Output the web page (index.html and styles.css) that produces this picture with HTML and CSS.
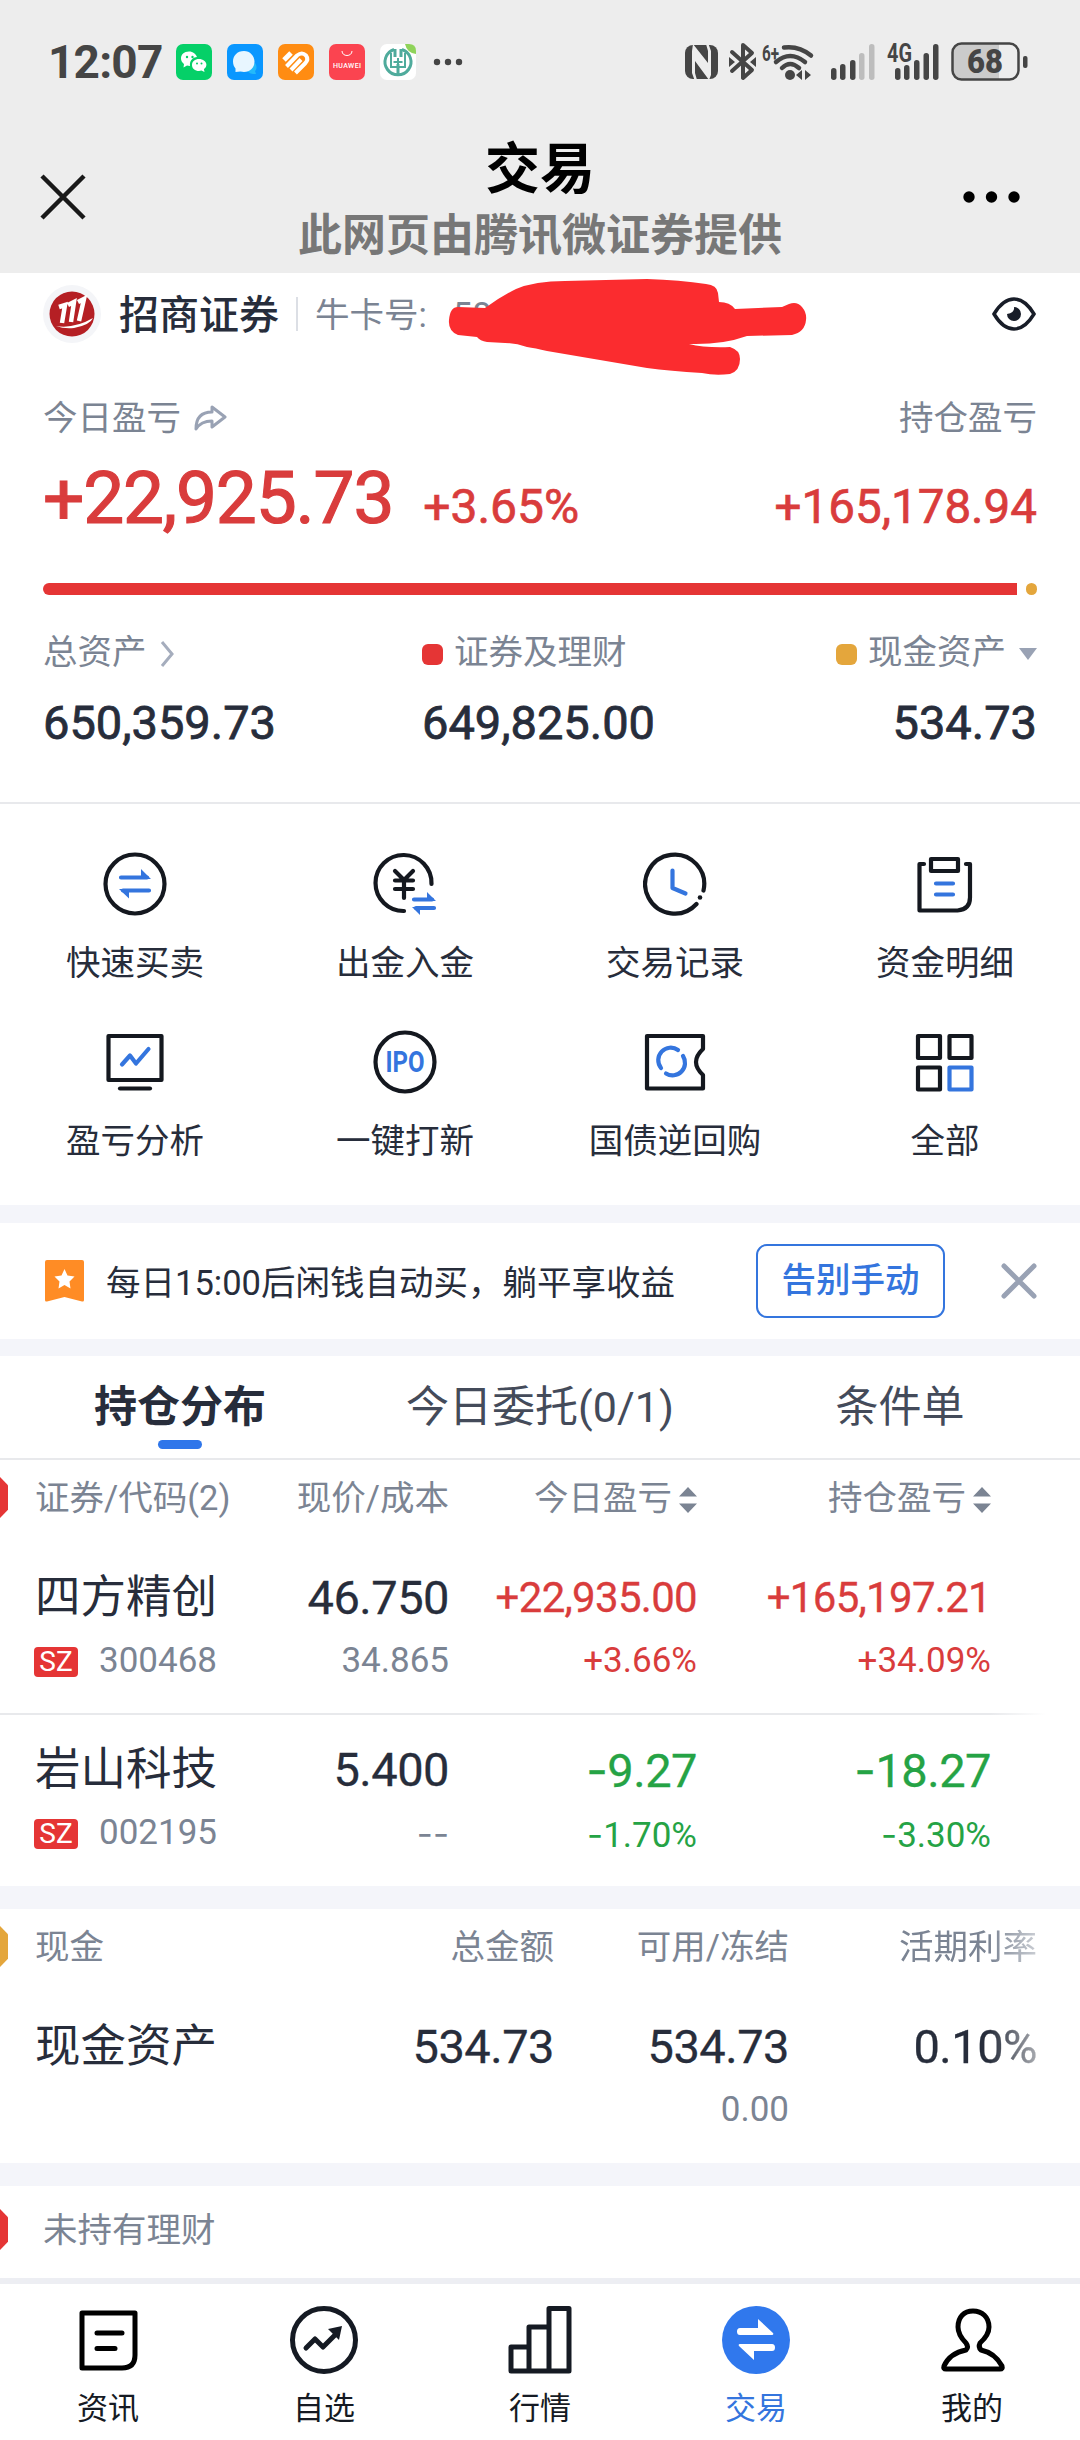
FILE: index.html
```
<!DOCTYPE html>
<html lang="zh-CN">
<head>
    <meta charset="UTF-8">
    <meta name="viewport" content="width=device-width, initial-scale=1.0">
    <title>交易</title>
    <link rel="stylesheet" href="styles.css">
</head>
<body>
    <div class="status-bar">
        <span class="time">12:07</span>
        <div class="app-icons">
            <svg width="36" height="36" viewBox="0 0 36 36">
                <rect width="36" height="36" rx="7" fill="#05d068"/>
                <path d="M13 7.500c-5 0-8 3-8 7 0 2 1 4 3 5.500l-.5 3.500 3.500-2 3 .5c-1-6 4-9 7-9-1-3-4-5.500-8-5.500z" fill="#fff"/>
                <path d="M23 15c-4 0-7 2.500-7 6s3 6 7 6l2.500-.4 3 1.500-.6-3c1.500-1 2.500-2.500 2.500-4.500 0-3-3.500-5.600-7.400-5.600z" fill="#fff"/>
                <g fill="#05d068"><circle cx="11" cy="13" r="1.200"/><circle cx="16.500" cy="13" r="1.200"/><circle cx="21" cy="19.500" r="1"/><circle cx="25.500" cy="19.500" r="1"/></g>
            </svg>
            <svg width="36" height="36" viewBox="0 0 36 36">
                <rect width="36" height="36" rx="7" fill="#0a97ff"/>
                <path d="M23 24l5-5c2 3 2 6 0 8l1 3c-4 0-7 0-9-4z" fill="#23b9fa"/>
                <path d="M17 7C10 7 6 12 6 17.500c0 3 1 5 2.500 7V28l5-.5c8 2 14-3 14-10C27.500 12 23 7 17 7z" fill="#e8f6ff"/>
            </svg>
            <svg width="36" height="36" viewBox="0 0 36 36">
                <rect width="36" height="36" rx="7" fill="#ff8c12"/>
                <g stroke="#fff" fill="none">
                    <path d="M6 16l7-7" stroke-width="5"/>
                    <path d="M8.500 22.500L19 11.500q5-4 9 0 3 4-1 8L17.500 29" stroke-width="4"/>
                    <path d="M13 26l10-10.500" stroke-width="4"/>
                </g>
            </svg>
            <svg width="36" height="36" viewBox="0 0 36 36">
                <rect width="36" height="36" rx="7" fill="#fb4450"/>
                <path d="M13 7c0 6 10 6 10 0" fill="none" stroke="#fff" stroke-width="1"/>
                <text class="huawei" x="18" y="23.500" text-anchor="middle" textLength="28">HUAWEI</text>
            </svg>
            <svg width="36" height="36" viewBox="0 0 36 36">
                <rect width="36" height="36" rx="7" fill="#fff"/>
                <path d="M25 0h4q7 0 7 7v3q-9-1-11-10z" fill="#8fd35a"/>
                <g fill="none" stroke="#4fab9c">
                    <path d="M14 5.500a13 13 0 1 0 8 0" stroke-width="3"/>
                    <path d="M18 20v12M15 5v8M21 5v8" stroke-width="3"/>
                    <path d="M11 9v14h14V9M13.500 18h9M18 14v8" stroke-width="2"/>
                </g>
            </svg>
        </div>
        <svg class="more-apps" width="30" height="10" viewBox="0 0 30 10" fill="#454545"><circle cx="4" cy="5" r="3.200"/><circle cx="15" cy="5" r="3.200"/><circle cx="26" cy="5" r="3.200"/></svg>

        <!-- NFC, bluetooth, wifi, two SIM signals, battery -->
        <svg class="system-icons" width="350" height="44" viewBox="0 0 350 44">
            <g fill="#454545">
                <rect x="5" y="5" width="33" height="34" rx="8"/>
                <path d="M13 4l15 19V11l-2-7h2.500l2.500 7v24l-2 5L15 21v12l2 7h-2.500L12 33V11z" fill="#ededed"/>
            </g>
            <g fill="none" stroke="#454545" stroke-width="4" stroke-linecap="round" stroke-linejoin="round">
                <path d="M52 12l20 18-9 8V5l9 8-20 18"/>
            </g>
            <path d="M49 17l6 5-6 5zM76 17l-6 5 6 5z" fill="#454545"/>
            <text class="net-small" x="82" y="21" textLength="17" lengthAdjust="spacingAndGlyphs">6+</text>
            <g fill="none" stroke="#454545" stroke-width="4.500">
                <path d="M104 7.500q15-2 27 8" stroke-linecap="round"/>
                <path d="M96 22q14-12 29 0" stroke-linecap="round"/>
                <path d="M102 28q8-8 17 0" stroke-linecap="round"/>
            </g>
            <g fill="#454545">
                <circle cx="110" cy="35" r="5"/>
                <path d="M116 35l6-5v10zM131 35l-6-5v10z"/>
                <rect x="151" y="28" width="5.500" height="12" rx="2.700"/>
                <rect x="160" y="24" width="5.500" height="16" rx="2.700"/>
                <rect x="170" y="20" width="5.500" height="20" rx="2.700"/>
                <rect x="179" y="13" width="5.500" height="27" rx="2.700" fill="#bdbdbd"/>
                <rect x="189" y="4" width="5.500" height="36" rx="2.700" fill="#bdbdbd"/>
                <rect x="215" y="28" width="5.500" height="12" rx="2.700"/>
                <rect x="224" y="25" width="5.500" height="15" rx="2.700"/>
                <rect x="234" y="20" width="5.500" height="20" rx="2.700"/>
                <rect x="243.500" y="13" width="5.500" height="27" rx="2.700"/>
                <rect x="253" y="4" width="5.500" height="36" rx="2.700"/>
            </g>
            <text class="net-label" x="207" y="22" textLength="25" lengthAdjust="spacingAndGlyphs">4G</text>
            <path d="M281 4h38v36h-38q-8 0-8-8V12q0-8 8-8z" fill="#cbcbcb"/>
            <rect x="272.500" y="3.500" width="66" height="36" rx="9" fill="none" stroke="#454545" stroke-width="2.500"/>
            <rect x="343" y="16" width="4.500" height="12" rx="2" fill="#454545"/>
            <text class="battery-level" x="305" y="33" text-anchor="middle" textLength="36" lengthAdjust="spacingAndGlyphs">68</text>
        </svg>
    </div>

    <header class="nav">
        <svg width="46" height="46" viewBox="0 0 46 46" stroke="#191919" stroke-width="4.500"><path d="M2 2l42 42M44 2L2 44"/></svg>
        <div class="nav-title">
            <h1>交易</h1>
            <p>此网页由腾讯微证券提供</p>
        </div>
        <svg class="nav-more" width="58" height="12" viewBox="0 0 58 12"><circle cx="7" cy="6" r="5.700"/><circle cx="29.500" cy="6" r="5.700"/><circle cx="52" cy="6" r="5.700"/></svg>
    </header>

    <main>
        <section class="broker">
            <svg width="58" height="58" viewBox="0 0 58 58">
                <circle cx="29" cy="29" r="29" fill="#f4f5f8"/>
                <circle cx="29" cy="29" r="22.500" fill="#b51f24"/>
                <path d="M13 41q18 3 37-8-3 7-19 10-10 1-18-2z" fill="#fff"/>
                <path d="M16 22l6-2-3 18M25 20l6-3-3 20M35 17l6-3-5 22" fill="none" stroke="#fff" stroke-width="4.500"/>
            </svg>
            <span class="broker-name">招商证券</span>
            <span class="broker-sep"></span>
            <span class="card-no">牛卡号:<span class="digits">58</span></span>
            <svg class="eye" width="44" height="36" viewBox="0 0 44 36">
                <path d="M2 18Q11 3 22 3t20 15Q33 33 22 33T2 18z" fill="none" stroke="#181d28" stroke-width="3.500"/>
                <path d="M22 11q1 6-7 7a7 7 0 1 0 7-7z" fill="#181d28"/>
            </svg>
            <svg class="scribble" width="360" height="100" viewBox="448 277 360 100">
                <path d="M449 320Q450 307 458 307L485 308Q500 297 516 289Q535 281 565 281L647 279Q680 280 706 284Q717 285 718 293L719 302Q730 302 735 309L782 307L789 304Q797 301 802 307Q807 313 806 320Q805 332 792 335L747 336Q722 345 689 344Q705 348 730 347Q740 350 740 359Q740 371 730 374Q715 376 702 373Q670 371 647 368L547 351Q535 348 527 347Q516 343 505 343L487 342Q480 341 477 337L458 335Q448 331 449 320z" fill="#fb2c2f"/>
            </svg>
        </section>

        <section class="summary">
            <div class="line labels">
                <span>今日盈亏</span>
                <svg class="share" width="34" height="28" viewBox="0 0 34 28"><path d="M3 25q0-17 16-17V3l13 10-13 10v-6Q8 17 3 25z" fill="none" stroke="#99a2b4" stroke-width="3" stroke-linejoin="round"/></svg>
                <span class="push">持仓盈亏</span>
            </div>
            <div class="line profit">
                <span class="big">+22,925.73</span>
                <span class="rate">+3.65%</span>
                <span class="hold push">+165,178.94</span>
            </div>
            <div class="ratio"><span class="ratio-stock"></span><span class="ratio-cash"></span></div>
            <div class="assets">
                <div class="asset">
                    <div class="asset-label">总资产<svg class="chevron" width="16" height="26" viewBox="0 0 16 26"><path d="M3 1l10 12L3 25" fill="none" stroke="#a5adbd" stroke-width="3"/></svg></div>
                    <div class="asset-value">650,359.73</div>
                </div>
                <div class="asset">
                    <div class="asset-label"><i class="mark red"></i>证券及理财</div>
                    <div class="asset-value">649,825.00</div>
                </div>
                <div class="asset right">
                    <div class="asset-label"><i class="mark gold"></i>现金资产<svg class="drop" width="18" height="12" viewBox="0 0 18 12"><path d="M0 0h18L9 12z" fill="#99a2b4"/></svg></div>
                    <div class="asset-value">534.73</div>
                </div>
            </div>
        </section>

        <section class="menu">
            <div class="menu-item">
                <svg class="icon" viewBox="0 0 64 64">
                    <circle cx="32" cy="32" r="29.500"/>
                    <path class="blue" d="M18 25.500h26M46 38.500H20"/>
                    <path class="blue-fill" d="M38 17l10 10H38zM26 46.500L16 37h10z"/>
                </svg>
                <span>快速买卖</span>
            </div>
            <div class="menu-item">
                <svg class="icon" viewBox="0 0 64 64">
                    <path d="M58.500 32A28 28 0 1 0 31 59"/>
                    <path d="M22 19l9 9 9-9M22 28.500h18M22 37h18M31 28v18"/>
                    <path class="blue" d="M41 47.500h18M61 56H43"/>
                    <path class="blue-fill" d="M54 40l9 9h-9zM47 63l-8-8h8z"/>
                </svg>
                <span>出金入金</span>
            </div>
            <div class="menu-item">
                <svg class="icon" viewBox="0 0 64 64">
                    <path d="M60.500 38.500A29.500 29.500 0 1 0 53.500 52"/>
                    <circle class="dot" cx="57" cy="45.500" r="2.300"/>
                    <path class="blue" d="M29.500 18.500V36l13 5.500"/>
                </svg>
                <span>交易记录</span>
            </div>
            <div class="menu-item">
                <svg class="icon" viewBox="0 0 64 64">
                    <path d="M11 12H6.500v46.500h38q12.500-1 12.500-13V12h-4"/>
                    <rect x="18" y="7" width="27" height="12"/>
                    <path class="blue" d="M23 31.500h17M23 42.500h17"/>
                </svg>
                <span>资金明细</span>
            </div>
            <div class="menu-item">
                <svg class="icon" viewBox="0 0 64 64">
                    <rect x="5.500" y="6" width="53" height="44"/>
                    <path d="M17 58.500h30"/>
                    <path class="blue" d="M19 34.500l8-9 6 8L45.500 19"/>
                </svg>
                <span>盈亏分析</span>
            </div>
            <div class="menu-item">
                <svg class="icon" viewBox="0 0 64 64">
                    <circle cx="32" cy="32" r="29.500"/>
                    <text class="ipo" x="32" y="42" text-anchor="middle" textLength="39" lengthAdjust="spacingAndGlyphs">IPO</text>
                </svg>
                <span>一键打新</span>
            </div>
            <div class="menu-item">
                <svg class="icon" viewBox="0 0 64 64">
                    <path d="M4 6h56v13q-14 13 0 26v13.500H4z"/>
                    <path class="blue" d="M35 20A12.500 12.500 0 0 0 18 38M23 43.500A12.500 12.500 0 0 0 40 26"/>
                </svg>
                <span>国债逆回购</span>
            </div>
            <div class="menu-item">
                <svg class="icon" viewBox="0 0 64 64">
                    <rect x="5" y="6" width="22" height="22"/>
                    <rect x="36.500" y="6" width="22" height="22"/>
                    <rect x="5" y="37.500" width="22" height="22"/>
                    <rect class="blue" x="36.500" y="37.500" width="22" height="22"/>
                </svg>
                <span>全部</span>
            </div>
        </section>

        <section class="notice">
            <svg width="39" height="42" viewBox="0 0 39 42">
                <path d="M2 0h35q2 0 2 2v38q0 2-2 1.500L19.500 37 2 41.500q-2 .5-2-1.500V2q0-2 2-2z" fill="#ff8c25"/>
                <path d="M19.500 9l3 6.500 7 1-5 5 1 7-6-3.500-6 3.500 1-7-5-5 7-1z" fill="#fff"/>
            </svg>
            <span class="notice-text">每日15:00后闲钱自动买，躺平享收益</span>
            <button class="notice-btn">告别手动</button>
            <svg class="notice-close" width="36" height="36" viewBox="0 0 36 36"><path d="M3 3l30 30M33 3L3 33" stroke="#99a2b4" stroke-width="5" stroke-linecap="round"/></svg>
        </section>

        <nav class="tabs">
            <a class="tab active">持仓分布</a>
            <a class="tab">今日委托(0/1)</a>
            <a class="tab">条件单</a>
        </nav>

        <section class="stocks">
            <div class="row head marker">
                <span>证券/代码(2)</span>
                <span>现价/成本</span>
                <span>今日盈亏<svg class="sort" width="18" height="26" viewBox="0 0 18 26"><path d="M9 0l9 9.500H0zM9 26l9-9.500H0z"/></svg></span>
                <span>持仓盈亏<svg class="sort" width="18" height="26" viewBox="0 0 18 26"><path d="M9 0l9 9.500H0zM9 26l9-9.500H0z"/></svg></span>
            </div>
            <div class="row stock">
                <div><p class="name">四方精创</p><p class="sub"><b class="sz">SZ</b>300468</p></div>
                <div><p class="num">46.750</p><p class="sub">34.865</p></div>
                <div class="up"><p class="num small">+22,935.00</p><p class="sub">+3.66%</p></div>
                <div class="up"><p class="num small">+165,197.21</p><p class="sub">+34.09%</p></div>
            </div>
            <div class="row stock">
                <div><p class="name">岩山科技</p><p class="sub"><b class="sz">SZ</b>002195</p></div>
                <div><p class="num">5.400</p><p class="sub"><span class="dash">--</span></p></div>
                <div class="down"><p class="num"><span class="dash">-</span>9.27</p><p class="sub"><span class="dash">-</span>1.70%</p></div>
                <div class="down"><p class="num"><span class="dash">-</span>18.27</p><p class="sub"><span class="dash">-</span>3.30%</p></div>
            </div>
        </section>

        <section class="cash">
            <div class="row head marker">
                <span>现金</span>
                <span>总金额</span>
                <span>可用/冻结</span>
                <span class="fade">活期利率</span>
            </div>
            <div class="row">
                <div><p class="name">现金资产</p></div>
                <div><p class="num">534.73</p></div>
                <div><p class="num">534.73</p><p class="sub">0.00</p></div>
                <div class="fade"><p class="num">0.10%</p></div>
            </div>
        </section>

        <section class="finance marker">未持有理财</section>
    </main>

    <footer class="tabbar">
        <a class="tabbar-item">
            <svg class="bar-icon" viewBox="0 0 70 70"><path d="M9 8h53v42q0 13-13 13H9zM24 28h25M24 43.500h18" stroke="#000"/></svg>
            <span>资讯</span>
        </a>
        <a class="tabbar-item">
            <svg class="bar-icon" viewBox="0 0 70 70"><circle cx="35" cy="35" r="31.500"/><path d="M17 43l9-9 8 8 14-14"/><path d="M39 24l14-3-3 14z" fill="#151a23" stroke="none"/></svg>
            <span>自选</span>
        </a>
        <a class="tabbar-item">
            <svg class="bar-icon" viewBox="0 0 70 70"><path d="M6 66V42h18v24M24 42V22h20v44M44 22V3.500h20V66H6"/></svg>
            <span>行情</span>
        </a>
        <a class="tabbar-item current">
            <svg class="bar-icon" viewBox="0 0 70 70"><circle cx="35" cy="35" r="34" fill="#3078ed" stroke="none"/><path d="M19 23h18V14l15 14q1 2-1 2H19q-3 0-3-3.500t3-3.500zM51 46H33v9L18 41q-1-2 1-2h32q3 0 3 3.500T51 46z" fill="#fff" stroke="none"/></svg>
            <span>交易</span>
        </a>
        <a class="tabbar-item">
            <svg class="bar-icon" viewBox="0 0 70 70"><path d="M29 45q3-3 0-7-8-8-8-16C21 12 27 6 36 6s16 6 16 16q0 8-9 16-2 4 1 7 14 3 21 16 1 3-2 3H9q-3 0-2-3 6-13 22-16z" stroke="#000"/></svg>
            <span>我的</span>
        </a>
    </footer>
</body>
</html>
```
FILE: styles.css
```
:root {
    --text-color: #272d3b;
    --muted-color: #7b8493;
    --up-color: #d93c3c;
    --down-color: #25a345;
    --red: #e53535;
    --gold: #e4a63c;
    --blue: #3475de;
    --band-color: #f4f5fa;
    --line-color: #e8e9ec;
}

* {
    margin: 0;
    padding: 0;
    box-sizing: border-box;
}

body {
    width: 1080px;
    height: 2440px;
    overflow: hidden;
    font-family: Roboto, "Noto Sans CJK SC", sans-serif;
    font-size: 34.5px;
    color: var(--text-color);
    background-color: #fff;
}

svg {
    display: block;
    flex-shrink: 0;
}

.push {
    margin-left: auto;
}

/* status bar */
.status-bar {
    display: flex;
    align-items: center;
    height: 123px;
    padding: 0 50px 0 48px;
    background-color: #ededed;
    color: #454545;
}

.time {
    width: 128px;
    font-size: 46px;
    font-weight: 700;
    letter-spacing: -0.8px;
}

.app-icons {
    display: flex;
    gap: 15px;
}

.more-apps {
    margin-left: 17px;
}

.system-icons {
    margin-left: auto;
    fill: #454545;
    overflow: visible;
}

.huawei {
    font-size: 7px;
    font-weight: 500;
    fill: #fff;
}

.net-small {
    font-size: 22px;
    font-weight: 700;
}

.net-label {
    font-size: 25px;
    font-weight: 700;
}

.battery-level {
    font-size: 34px;
    font-weight: 900;
}

/* title bar */
.nav {
    display: flex;
    justify-content: space-between;
    align-items: center;
    height: 150px;
    padding: 0 60px 2px 40px;
    background-color: #ededed;
}

.nav-title {
    padding: 8px 0 0 32px;
    text-align: center;
}

.nav-title h1 {
    font-size: 55px;
    font-weight: 700;
    line-height: 70px;
    color: #000;
}

.nav-title p {
    font-size: 44px;
    font-weight: 700;
    line-height: 64px;
    color: #777;
}

/* broker */
.broker {
    position: relative;
    display: flex;
    align-items: center;
    height: 82px;
    padding: 0 44px 0 43px;
}

.broker-name {
    margin: -4px 0 0 18px;
    font-size: 40px;
    font-weight: 500;
}

.broker-sep {
    width: 2px;
    height: 34px;
    margin: 0 17px;
    background-color: #dcdfe5;
}

.card-no {
    margin-top: -5px;
    color: var(--muted-color);
}

.card-no .digits {
    margin-left: 26px;
}

.eye {
    margin-left: auto;
}

.scribble {
    position: absolute;
    left: 448px;
    top: 4px;
}

/* summary */
.summary {
    height: 449px;
    padding: 33px 43px 0;
    border-bottom: 2px solid var(--line-color);
}

.line {
    display: flex;
    align-items: center;
}

.labels,
.asset-label {
    line-height: 60px;
    color: var(--muted-color);
}

.share {
    margin-left: 12px;
}

.profit {
    align-items: baseline;
    height: 135px;
    line-height: 101px;
    color: var(--up-color);
}

.big {
    font-size: 73px;
    letter-spacing: -1.2px;
    -webkit-text-stroke: 1.2px;
}

.rate {
    margin-left: 30px;
    font-size: 48px;
    -webkit-text-stroke: 0.7px;
}

.hold {
    font-size: 47.5px;
    -webkit-text-stroke: 0.7px;
}

.ratio {
    display: flex;
    gap: 9px;
    height: 12px;
}

.ratio-stock {
    flex: 1;
    border-radius: 6px 0 0 6px;
    background-color: var(--red);
}

.ratio-cash {
    width: 11px;
    border-radius: 6px;
    background-color: var(--gold);
}

.assets {
    display: grid;
    grid-template-columns: 379px 1fr 1fr;
    margin-top: 27px;
}

.asset-label {
    display: flex;
    align-items: center;
}

.asset-value {
    margin-top: 11px;
    font-size: 47px;
    line-height: 60px;
    -webkit-text-stroke: 0.8px;
}

.asset.right .asset-label {
    justify-content: flex-end;
}

.asset.right .asset-value {
    text-align: right;
}

.chevron {
    margin: 4px 0 0 12px;
}

.drop {
    margin: 4px 0 0 13px;
}

.mark {
    width: 21px;
    height: 21px;
    margin: 5px 11px 0 0;
    border-radius: 6px;
}

.mark.red {
    background-color: var(--red);
}

.mark.gold {
    background-color: var(--gold);
}

/* menu */
.menu {
    display: grid;
    grid-template-columns: repeat(4, 1fr);
    grid-auto-rows: 178px;
    height: 401px;
    padding-top: 48px;
}

.menu-item {
    display: flex;
    flex-direction: column;
    align-items: center;
}

.menu-item span {
    margin-top: 17px;
    line-height: 60px;
}

.icon {
    width: 64px;
    height: 64px;
    fill: none;
    stroke: #14181f;
    stroke-width: 4.2;
    stroke-linecap: round;
    stroke-linejoin: round;
}

.icon .blue {
    stroke: var(--blue);
}

.icon .blue-fill {
    fill: var(--blue);
    stroke: none;
}

.icon .dot {
    fill: #14181f;
    stroke: none;
}

.ipo {
    font-size: 29px;
    font-weight: 700;
    fill: var(--blue);
    stroke: none;
}

/* notice */
.notice {
    display: flex;
    align-items: center;
    height: 151px;
    padding: 0 43px 0 45px;
    border-top: 18px solid var(--band-color);
    border-bottom: 17px solid var(--band-color);
}

.notice-text {
    margin: -3px 0 0 22px;
}

.notice-btn {
    width: 189px;
    height: 74px;
    margin-left: auto;
    padding-bottom: 8px;
    border: 2px solid var(--blue);
    border-radius: 11px;
    background: none;
    font: inherit;
    font-weight: 500;
    color: var(--blue);
}

.notice-close {
    margin-left: 56px;
}

/* tabs */
.tabs {
    display: grid;
    grid-template-columns: 360px 360px 360px;
    height: 104px;
    border-bottom: 2px solid var(--line-color);
}

.tab {
    position: relative;
    font-size: 43px;
    line-height: 103px;
    text-align: center;
    color: #444b5a;
}

.tab.active {
    font-weight: 700;
    color: var(--text-color);
}

.tab.active::after {
    content: "";
    position: absolute;
    left: 158px;
    bottom: 10px;
    width: 44px;
    height: 9px;
    border-radius: 5px;
    background-color: #2f76ea;
}

/* tables */
.row {
    display: grid;
    grid-template-columns: 200px 214px 248px 294px;
    padding-left: 35px;
}

.row > :not(:first-child) {
    text-align: right;
}

.head {
    height: 81px;
    line-height: 77px;
    color: var(--muted-color);
}

.marker {
    position: relative;
}

.marker::before {
    content: "";
    position: absolute;
    left: 0;
    top: 17px;
    width: 8px;
    height: 41px;
    background-color: var(--red);
    clip-path: polygon(0 0, 100% 20%, 100% 80%, 0 100%);
}

.sort {
    display: inline-block;
    margin-left: 7px;
    vertical-align: -3px;
    fill: var(--muted-color);
}

.stock {
    height: 172px;
    padding-top: 27px;
}

.stock + .stock {
    height: 173px;
    background: linear-gradient(to right, var(--line-color) 990px, #fff 1046px) no-repeat top / 100% 2px;
}

.name {
    font-size: 45.5px;
    line-height: 60px;
}

.num {
    font-size: 47px;
    line-height: 60px;
    letter-spacing: -0.5px;
    -webkit-text-stroke: 0.3px;
}

.num.small {
    font-size: 42px;
    letter-spacing: -0.7px;
}

.sub {
    margin-top: 3px;
    font-size: 35px;
    line-height: 60px;
    color: var(--muted-color);
    white-space: nowrap;
}

/* Roboto's hyphen is too short next to the digits */
.dash {
    font-family: Inter, sans-serif;
}

.up,
.up .sub {
    color: var(--up-color);
}

.down,
.down .sub {
    color: var(--down-color);
}

.sz {
    display: inline-block;
    width: 44px;
    height: 30px;
    margin: 0 21px 0 -1px;
    border-radius: 4px;
    background-color: var(--red);
    font-size: 28px;
    font-weight: 400;
    line-height: 30px;
    text-align: center;
    vertical-align: 1px;
    color: #fff;
}

.cash {
    height: 300px;
    border-top: 23px solid var(--band-color);
    border-bottom: 23px solid var(--band-color);
}

.cash .row {
    grid-template-columns: 200px 319px 235px 248px;
}

.cash .head {
    height: 108px;
}

.cash .marker::before {
    background-color: var(--gold);
}

.fade {
    -webkit-mask-image: linear-gradient(to right, #000 200px, rgba(0, 0, 0, 0.4) 248px);
    mask-image: linear-gradient(to right, #000 200px, rgba(0, 0, 0, 0.4) 248px);
}

.finance {
    height: 92px;
    padding-left: 43px;
    line-height: 88px;
    color: var(--muted-color);
}

.finance::before {
    top: 23px;
}

/* bottom bar */
.tabbar {
    display: grid;
    grid-template-columns: repeat(5, 1fr);
    height: 162px;
    padding-top: 21px;
    border-top: 6px solid #edeef3;
    background-color: #fff;
}

.tabbar-item {
    display: flex;
    flex-direction: column;
    align-items: center;
    font-size: 31px;
    line-height: 50px;
    color: #151a23;
}

.tabbar-item span {
    margin-top: 9px;
}

.tabbar-item.current {
    color: var(--blue);
}

.bar-icon {
    width: 70px;
    height: 70px;
    fill: none;
    stroke: #151a23;
    stroke-width: 5;
    stroke-linecap: round;
    stroke-linejoin: round;
}
```
